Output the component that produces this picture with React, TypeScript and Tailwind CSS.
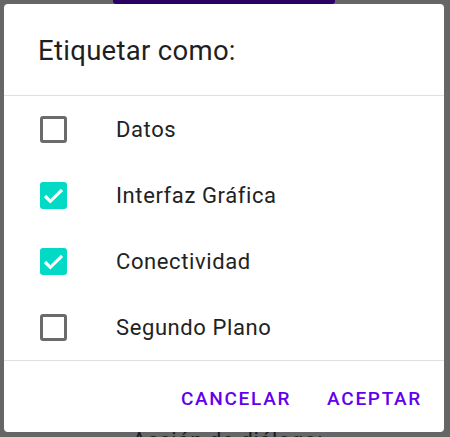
import { useState } from "react";

type Option = { id: string; label: string };

const OPTIONS: Option[] = [
  { id: "datos", label: "Datos" },
  { id: "gui", label: "Interfaz Gráfica" },
  { id: "red", label: "Conectividad" },
  { id: "bg", label: "Segundo Plano" },
];

function Checkbox({ checked }: { checked: boolean }) {
  if (checked) {
    return (
      <span className="flex h-[27px] w-[27px] items-center justify-center rounded-[3px] bg-[#03dac5]">
        <svg viewBox="0 0 27 27" className="h-[27px] w-[27px]" fill="none">
          <path d="M5 14l5.3 5.3L22 7.8" stroke="#fff" strokeWidth="3.2" />
        </svg>
      </span>
    );
  }
  return <span className="block h-[27px] w-[27px] rounded-[3px] border-[3px] border-[#6b6b6b]" />;
}

export default function App() {
  const [selected, setSelected] = useState<string[]>(["gui", "red"]);

  const toggle = (id: string) =>
    setSelected((s) => (s.includes(id) ? s.filter((x) => x !== id) : [...s, id]));

  return (
    <div
      className="relative h-[437px] w-[450px] overflow-hidden bg-[#666666]"
      style={{ fontFamily: "Roboto, 'Noto Sans', sans-serif" }}
    >
      {/* dimmed app content behind the dialog */}
      <div className="absolute left-[113px] top-[-40px] h-[44px] w-[222px] rounded-[3px] bg-[#2b0066]">
        <span className="absolute left-[30px] top-[17px] text-[19px] leading-[23px] tracking-[0.6px] text-[#8a8a8a]">
          Diálogo
        </span>
      </div>
      <div className="absolute left-[132px] top-[424px] text-[22px] tracking-[0.6px] text-[#1c1c1c]">
        Acción de diálogo:
      </div>

      <div className="relative ml-[4px] mt-[4px] flex h-[428px] w-[440px] flex-col rounded-[4px] bg-white">
        <div className="flex h-[91px] items-center pl-[34px] pt-[2px]">
          <h2 className="text-[27.5px] font-normal tracking-[0.3px] text-[#1f1f1f]">Etiquetar como:</h2>
        </div>
        <div className="h-px bg-[#e0e0e0]" />
        <ul className="flex flex-col">
          {OPTIONS.map((o) => (
            <li
              key={o.id}
              onClick={() => toggle(o.id)}
              className="flex h-[66px] cursor-pointer items-center"
            >
              <span className="ml-[36px] w-[76px]">
                <Checkbox checked={selected.includes(o.id)} />
              </span>
              <span className="text-[22px] tracking-[0.6px] text-[#222222]">{o.label}</span>
            </li>
          ))}
        </ul>
        <div className="h-px bg-[#e0e0e0]" />
        <div className="flex flex-1 items-center justify-end gap-[36px] pr-[22px] pt-[6px]">
          <button type="button" className="text-[19px] font-medium tracking-[1.7px] text-[#6200ee]">
            CANCELAR
          </button>
          <button type="button" className="text-[19px] font-medium tracking-[1.7px] text-[#6200ee]">
            ACEPTAR
          </button>
        </div>
      </div>
    </div>
  );
}
